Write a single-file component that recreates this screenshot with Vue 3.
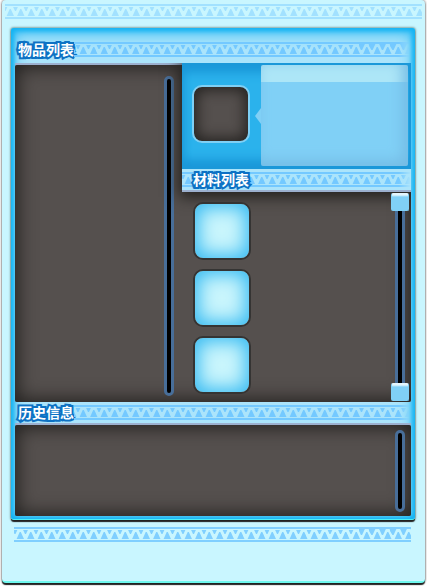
<script setup>
import { h } from 'vue'

const materials = [1, 2, 3]

// Decorative trim: two rules with a row of alternating triangles between them.
// The row is anchored at the right end; `dense` closes the upper gaps there.
const Trim = (props) => {
  const tail = props.dense ? 52 : 0
  return h('svg', { class: 'trim', height: 15, 'aria-hidden': 'true' }, [
    h('svg', { x: '100%', overflow: 'visible' }, [
      h('rect', { x: -2100, width: 2100 - tail, height: 15, fill: 'url(#teeth)' }),
      h('rect', { x: -tail, width: tail, height: 15, fill: 'url(#teeth-dense)' })
    ])
  ])
}
Trim.props = { dense: Boolean }
</script>

<template>
  <main class="card">
    <svg class="defs" width="0" height="0" aria-hidden="true">
      <defs>
        <pattern id="teeth" width="21" height="15" patternUnits="userSpaceOnUse">
          <path
            fill="#74c9ff"
            d="M0 0H21V2H0ZM0 13H21V15H0ZM7.7 5H8.8L12 12H4.6ZM18.2 5H19.3L21 8.6V12H15.1ZM0 8.8L1.5 12H0ZM.6 3H5.4L3.5 7H2.5ZM11.1 3H15.9L14 7H13Z"
          />
        </pattern>
        <pattern id="teeth-dense" width="21" height="15" patternUnits="userSpaceOnUse">
          <path
            fill="#74c9ff"
            d="M0 0H21V2H0ZM0 13H21V15H0ZM7.7 5H8.8L12 12H4.6ZM18.2 5H19.3L21 8.6V12H15.1ZM0 8.8L1.5 12H0ZM0 2H6.4L3.6 8H2.4L0 4ZM10.1 2H16.9L14.1 8H12.9ZM20.6 2H21V3Z"
          />
        </pattern>
      </defs>
    </svg>

    <Trim class="trim-top" />

    <section class="panel">
      <header class="title title-items">
        <h2>物品列表</h2>
        <Trim dense />
      </header>

      <div class="workspace">
        <div class="items">
          <div class="track"></div>
        </div>
        <div class="detail">
          <div class="detail-head">
            <div class="preview">
              <button class="slot" type="button" aria-label="物品"></button>
              <div class="bubble"></div>
            </div>
            <header class="title title-materials">
              <h2>材料列表</h2>
              <Trim />
            </header>
          </div>
          <div class="materials">
            <div class="cells">
              <button v-for="m in materials" :key="m" class="cell" type="button" :aria-label="`材料 ${m}`"></button>
            </div>
            <div class="scroller">
              <button class="knob" type="button" aria-label="向上"></button>
              <div class="rail"></div>
              <button class="knob" type="button" aria-label="向下"></button>
            </div>
          </div>
        </div>
      </div>

      <header class="title title-history">
        <h2>历史信息</h2>
        <Trim />
      </header>
      <div class="history">
        <div class="track"></div>
      </div>
    </section>

    <Trim class="trim-bottom" dense />
  </main>
</template>

<style>
body {
  background: #fff;
}
</style>

<style scoped>
* {
  box-sizing: border-box;
}
.card {
  margin: 0 2px 4px;
  padding: 4px 0 39px;
  border-radius: 4px;
  border-bottom: 2px solid #6ff8ee;
  background: #c9f6ff;
  box-shadow: 0 2px 1px #222, 0 0 2px 1px #aaa;
  font-family: "Noto Sans CJK SC", sans-serif;
}
.defs {
  position: absolute;
}
.trim {
  display: block;
  flex: 1;
  min-width: 0;
  width: 100%;
}
.trim-top {
  width: calc(100% - 6px);
  margin: 0 3px;
  opacity: 0.45;
}
.trim-bottom {
  width: calc(100% - 26px);
  margin: 7px 14px 0 12px;
  opacity: 0.85;
}
.panel {
  margin: 9px 10px 0 9px;
  padding: 0 4px 3px;
  border-radius: 3px;
  border-bottom: 1px solid #4cf0f8;
  background: #abe4fb;
  box-shadow: inset 0 0 4px 3px #14b4f3, inset 0 3px 16px 1px #19b3f2, 0 2px 1px #222, 0 0 2px 1px #8aa;
}
.title {
  display: flex;
  align-items: center;
}
.title h2 {
  margin: 0;
  padding-bottom: 2px;
  color: #fff;
  font-size: 14px;
  line-height: 20px;
  font-weight: 700;
  white-space: nowrap;
  -webkit-text-stroke: 4px #0d72c4;
  paint-order: stroke fill;
  stroke-linejoin: round;
}
.title-items {
  height: 37px;
  padding: 8px 0 0 3px;
  border-bottom: 2px solid #9cb0cf;
}
.title-materials {
  position: relative;
  height: 23px;
  padding-left: 11px;
  border-bottom: 2px solid #9cb0cf;
  background: #abe4fb;
}
.title-materials .trim {
  position: absolute;
  left: 0;
  top: 3px;
}
.title-materials h2 {
  position: relative;
  z-index: 1;
}
.title-history {
  height: 23px;
  padding-left: 3px;
  border-bottom: 2px solid #9cb0cf;
}
.title-history .trim,
.title-items .trim,
.title-materials .trim {
  mask-image: linear-gradient(to left, transparent, #000 12px);
}
.workspace {
  display: flex;
  border-radius: 2px;
  background: #55504e;
  box-shadow: inset 0 0 18px 3px #242220;
}
.items {
  display: flex;
  justify-content: flex-end;
  width: 167px;
  padding: 11px 8px 6px 0;
}
.track {
  width: 10px;
  border: 3px solid #486e99;
  border-radius: 5px;
  background: #000;
}
.detail {
  flex: 1;
  min-width: 0;
}
.detail-head {
  margin-top: -2px;
  box-shadow: 0 2px 14px 3px #22201e;
  clip-path: inset(0 0 -24px -24px);
}
.preview {
  display: flex;
  gap: 11px;
  height: 106px;
  padding: 2px 3px 3px 10px;
  background: #2bb2ec;
  box-shadow: inset -2px 0 0 #1b98d9, inset 0 2px 0 #1b98d9, inset 0 -3px 0 #1b98d9, inset 0 10px 10px #1b98d9, inset 0 -10px 10px #1b98d9;
}
.slot {
  flex: none;
  width: 58px;
  height: 58px;
  margin-top: 20px;
  padding: 0;
  border: 2px solid #7fd0f5;
  border-radius: 10px;
  background: #55504e;
  box-shadow: inset 0 0 14px 3px #242220;
}
.bubble {
  position: relative;
  flex: 1;
  border-radius: 2px;
  background: linear-gradient(#ade6f7 17px, transparent 17px), #80d0f6;
  box-shadow: inset -5px -5px 14px #74bbe4;
}
.bubble::before {
  content: "";
  position: absolute;
  left: -6px;
  top: 43px;
  border: 8px solid transparent;
  border-left: 0;
  border-right: 6px solid #80d0f6;
}
.materials {
  position: relative;
  z-index: 1;
  display: flex;
  justify-content: space-between;
  padding: 1px 2px 1px 11px;
}
.cells {
  display: flex;
  flex-direction: column;
  gap: 9px;
  padding: 9px 0 7px;
}
.cell {
  width: 58px;
  height: 58px;
  padding: 0;
  border: 2px solid #353433;
  border-radius: 10px;
  background: #c9f5fc;
  box-shadow: inset 0 0 18px 4px #38bbf2;
}
.scroller {
  display: flex;
  flex-direction: column;
  align-items: center;
}
.knob {
  width: 18px;
  height: 18px;
  padding: 0;
  border: 1px solid #80d0f6;
  border-top-color: #e4f6fd;
  border-radius: 2px;
  background: linear-gradient(#e4f6fd 1px, #80d0f6 3px);
}
.rail {
  flex: 1;
  width: 10px;
  border: solid #486e99;
  border-width: 0 3px;
  background: #000;
}
.history {
  display: flex;
  justify-content: flex-end;
  height: 91px;
  padding: 5px 6px 4px 0;
  border-radius: 2px;
  background: #55504e;
  box-shadow: inset 0 0 18px 3px #242220;
}
</style>
